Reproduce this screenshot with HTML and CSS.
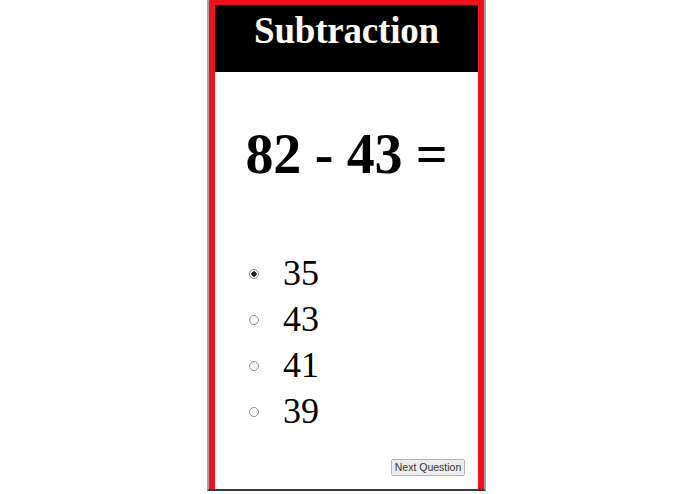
FILE: index.html
```html
<!DOCTYPE html>
<html lang="en">
<head>
<meta charset="utf-8">
<title>Subtraction</title>
<link rel="stylesheet" href="styles.css">
</head>
<body>
<div class="frame">
  <div class="card">
    <header class="header">
      <h1 class="title">Subtraction</h1>
    </header>
    <main class="body">
      <h2 class="question">82 - 43 =</h2>
      <form class="options">
        <label class="option"><input class="radio" type="radio" name="answer" value="35" checked><span class="num">35</span></label>
        <label class="option"><input class="radio" type="radio" name="answer" value="43"><span class="num">43</span></label>
        <label class="option"><input class="radio" type="radio" name="answer" value="41"><span class="num">41</span></label>
        <label class="option"><input class="radio" type="radio" name="answer" value="39"><span class="num">39</span></label>
      </form>
      <div class="actions">
        <button class="next" type="button">Next Question</button>
      </div>
    </main>
  </div>
</div>
</body>
</html>
```

FILE: styles.css
```css
html, body {
  margin: 0;
  padding: 0;
  background: #ffffff;
}

body {
  font-family: "Liberation Serif", "Times New Roman", serif;
  color: #000;
}

.frame {
  width: 275px;
  margin: 0 auto;
  border-left: 2px solid #a9a2a2;
  border-right: 2px solid #a9a2a2;
  border-bottom: 2px solid #3a3a3a;
  position: relative;
  left: -1px;
}

.card {
  border: 6px solid #f2101f;
  border-top-width: 5px;
  border-bottom: none;
  display: flex;
  flex-direction: column;
}

.header {
  background: #000;
  height: 67px;
  display: flex;
  justify-content: center;
}

.title {
  margin: 0;
  padding-top: 6px;
  font-size: 37px;
  line-height: 40px;
  font-weight: bold;
  color: #fffdf2;
  letter-spacing: -0.2px;
}

.body {
  background: #fff;
  height: 417px;
  display: flex;
  flex-direction: column;
}

.question {
  margin: 54px 0 0 0;
  font-size: 56px;
  line-height: 56px;
  font-weight: bold;
  text-align: center;
  letter-spacing: -0.3px;
}

.options {
  margin: 70px 0 0 0;
  padding-left: 34px;
  display: flex;
  flex-direction: column;
}

.option {
  display: flex;
  align-items: center;
  height: 46px;
  font-size: 36px;
  line-height: 46px;
}

.radio {
  appearance: none;
  -webkit-appearance: none;
  margin: 0 24px 0 0;
  width: 10px;
  height: 10px;
  border: 1px solid #8a8a8a;
  border-radius: 50%;
  background: #fff;
  box-sizing: border-box;
  position: relative;
  top: -1px;
}

.radio:checked {
  background: radial-gradient(circle, #222 0, #222 2.4px, #fff 3px);
}

.num {
  display: block;
  padding-bottom: 4px;
}

.actions {
  margin-top: auto;
  padding: 0 13px 13px 0;
  display: flex;
  justify-content: flex-end;
}

.next {
  font-family: "Liberation Sans", Arial, sans-serif;
  font-size: 10.5px;
  color: #333;
  background: #ececec;
  border: 1px solid #b4b4b4;
  border-radius: 2px;
  height: 17px;
  width: 74px;
  padding: 0;
  line-height: 15px;
}
```
